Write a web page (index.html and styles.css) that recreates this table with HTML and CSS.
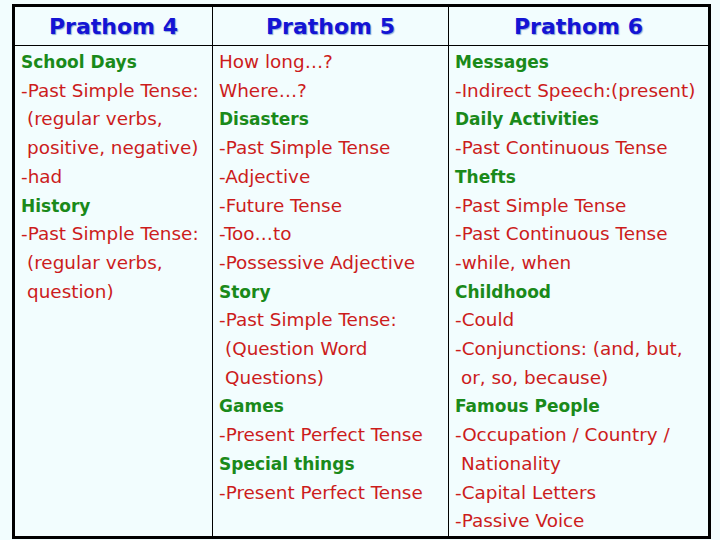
FILE: index.html
```html
<!DOCTYPE html>
<html>
<head>
<meta charset="utf-8">
<link rel="stylesheet" href="styles.css">
</head>
<body>
<table class="grid">
  <tr class="head">
    <th class="c1">Prathom 4</th>
    <th class="c2">Prathom 5</th>
    <th class="c3">Prathom 6</th>
  </tr>
  <tr class="body">
    <td class="c1">
      <div class="t">School Days</div>
      <div class="l">-Past Simple Tense:</div>
      <div class="l in">(regular verbs,</div>
      <div class="l in">positive, negative)</div>
      <div class="l">-had</div>
      <div class="t">History</div>
      <div class="l">-Past Simple Tense:</div>
      <div class="l in">(regular verbs,</div>
      <div class="l in">question)</div>
    </td>
    <td class="c2">
      <div class="l">How long…?</div>
      <div class="l">Where…?</div>
      <div class="t">Disasters</div>
      <div class="l">-Past Simple Tense</div>
      <div class="l">-Adjective</div>
      <div class="l">-Future Tense</div>
      <div class="l">-Too…to</div>
      <div class="l">-Possessive Adjective</div>
      <div class="t">Story</div>
      <div class="l">-Past Simple Tense:</div>
      <div class="l in">(Question Word</div>
      <div class="l in">Questions)</div>
      <div class="t">Games</div>
      <div class="l">-Present Perfect Tense</div>
      <div class="t">Special things</div>
      <div class="l">-Present Perfect Tense</div>
    </td>
    <td class="c3">
      <div class="t">Messages</div>
      <div class="l">-Indirect Speech:(present)</div>
      <div class="t">Daily Activities</div>
      <div class="l">-Past Continuous Tense</div>
      <div class="t">Thefts</div>
      <div class="l">-Past Simple Tense</div>
      <div class="l">-Past Continuous Tense</div>
      <div class="l">-while, when</div>
      <div class="t">Childhood</div>
      <div class="l">-Could</div>
      <div class="l">-Conjunctions: (and, but,</div>
      <div class="l in">or, so, because)</div>
      <div class="t">Famous People</div>
      <div class="l">-Occupation / Country /</div>
      <div class="l in">Nationality</div>
      <div class="l">-Capital Letters</div>
      <div class="l">-Passive Voice</div>
    </td>
  </tr>
</table>
</body>
</html>
```
FILE: styles.css
```css
html, body {
  margin: 0;
  padding: 0;
  background: #f2fdfe;
}
body {
  font-family: "DejaVu Sans", sans-serif;
}
.grid {
  margin: 4px 0 0 12px;
  width: 697px;
  height: 534px;
  border-collapse: collapse;
  border: 3px solid #000;
  table-layout: fixed;
}
.grid th, .grid td {
  border: 1.5px solid #000;
}
.grid .c1 { width: 197px; }
.grid .c2 { width: 235px; }
.grid .c3 { width: 259px; }
.head th {
  height: 38px;
  font-size: 22px;
  font-weight: bold;
  color: #1414d4;
  text-shadow: 1px 1px 1px #8aa8d8;
  padding: 0;
  vertical-align: middle;
}
.body td {
  vertical-align: top;
  padding: 2px 0 0 6px;
  font-size: 17px;
  line-height: 28.7px;
  white-space: nowrap;
}
.t {
  color: #1a8a1a;
  font-weight: bold;
}
.l {
  color: #cc1c1c;
  font-size: 18.4px;
}
.in {
  padding-left: 6px;
}
```
